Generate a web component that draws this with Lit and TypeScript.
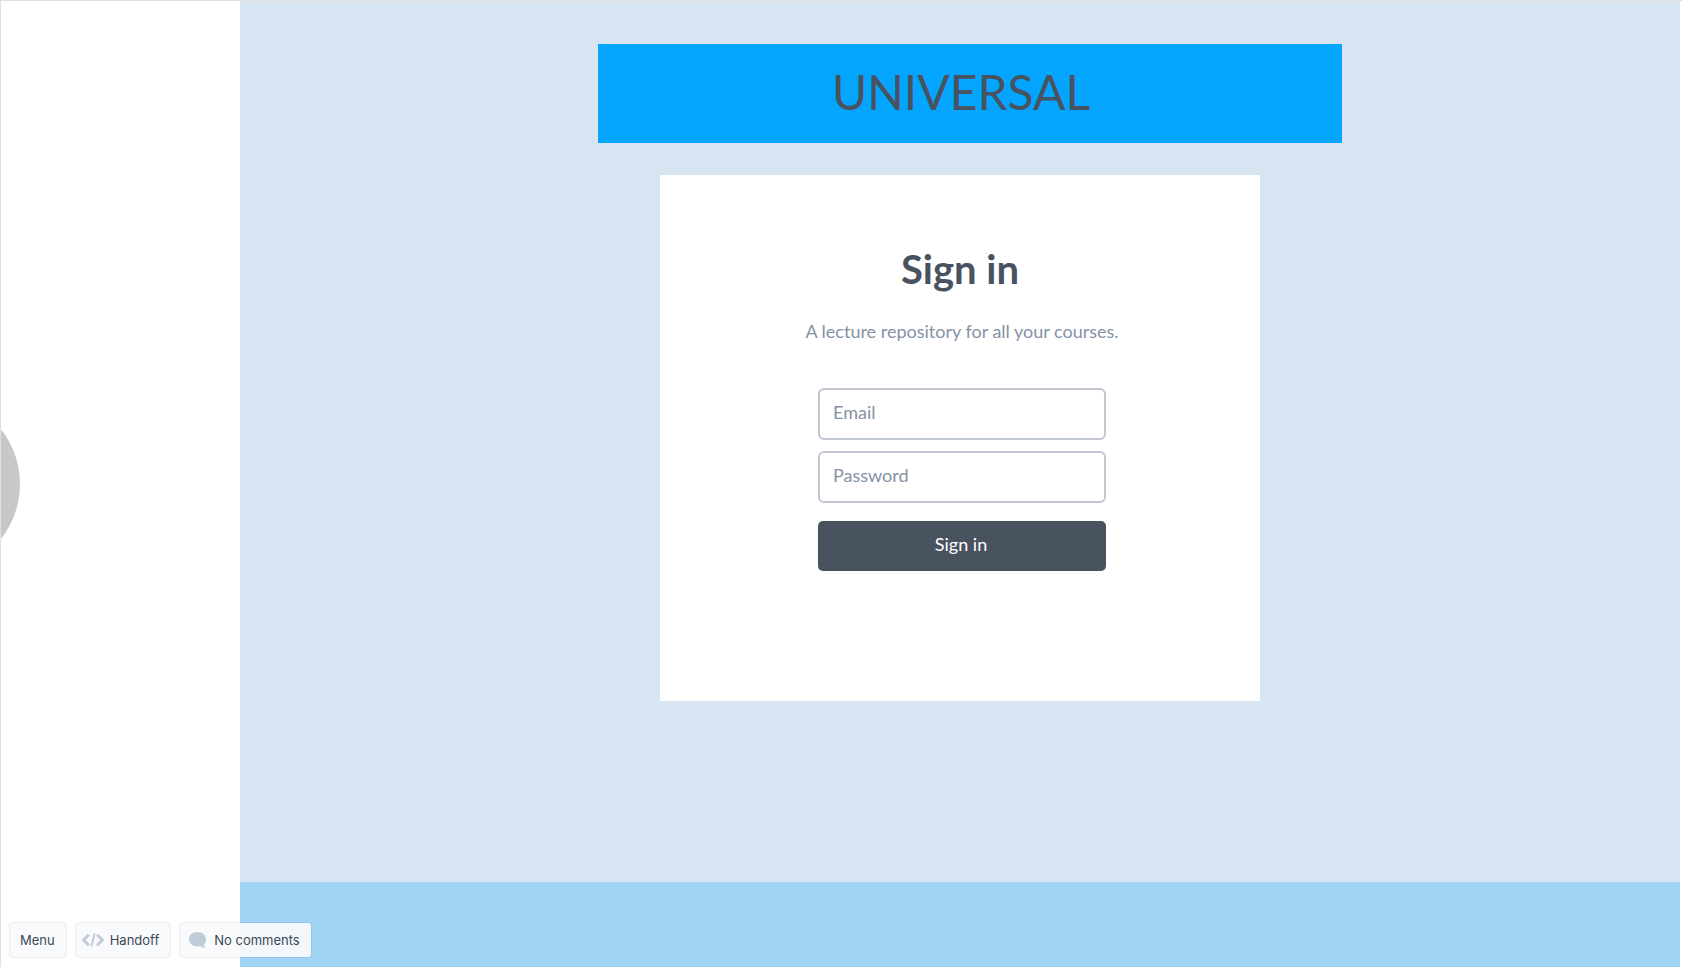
import { LitElement, html, css, svg } from "lit";
import { customElement } from "lit/decorators.js";

const codeIcon = svg`<svg class="code" viewBox="0 0 22 14" aria-hidden="true">
  <path d="M6 2.500 1.500 7 6 11.500M16 2.500 20.500 7 16 11.500" />
  <path class="slash" d="M12.400 1.200 9.600 12.800" />
</svg>`;

const bubbleIcon = svg`<svg class="bubble" viewBox="0 0 17 16" aria-hidden="true">
  <path d="M8.500 0C13.200 0 17 3 17 7.200c0 2.300-.8 4.300-2.300 5.600.1 1 .6 1.700 1.500 2.300.3.200.2.700-.2.700-2 .2-3.400-.4-4.400-1.700-1 .2-2 .3-3.100.3C3.800 14.400 0 11.400 0 7.200S3.800 0 8.500 0Z" />
</svg>`;

@customElement("sign-in-card")
export class SignInCard extends LitElement {
  static styles = css`
    :host {
      display: block;
    }
    .card {
      box-sizing: border-box;
      padding: 70px 24px 130px;
      background: #fff;
      text-align: center;
    }
    .heading {
      margin: 0;
      font-size: 40px;
      line-height: 48px;
      font-weight: 700;
      color: #49525f;
    }
    .lead {
      margin: 26px 0 0;
      padding-left: 4px;
      font-size: 18px;
      line-height: 24px;
      color: #8492a6;
    }
    .form {
      display: flex;
      flex-direction: column;
      width: 100%;
      max-width: 288px;
      margin: 0 auto;
      padding: 45px 0 0 4px;
    }
    .field {
      display: grid;
      align-items: center;
      margin-bottom: 11px;
    }
    .label,
    .input {
      grid-area: 1 / 1;
    }
    .label {
      z-index: 1;
      justify-self: start;
      padding: 0 15px 4px;
      font-size: 18px;
      line-height: 24px;
      color: #8492a6;
      pointer-events: none;
    }
    .field:has(.input:not(:placeholder-shown)) .label {
      visibility: hidden;
    }
    .input {
      box-sizing: border-box;
      width: 100%;
      height: 52px;
      padding: 0 13px 4px;
      border: 2px solid #c1c7d3;
      border-radius: 6px;
      background: #fff;
      font: 18px/24px Lato, sans-serif;
      color: #49525f;
    }
    .submit {
      height: 50px;
      margin: 7px 0 0;
      padding: 0 2px 4px 0;
      border: 0;
      border-radius: 5px;
      background: #49525f;
      font: 18px/24px Lato, sans-serif;
      color: #fff;
    }
  `;

  render() {
    return html`
      <section class="card">
        <h2 class="heading">Sign in</h2>
        <p class="lead">A lecture repository for all your courses.</p>
        <form class="form" @submit=${(e: Event) => e.preventDefault()}>
          <div class="field">
            <label class="label" for="email">Email</label>
            <input class="input" id="email" type="email" placeholder=" " />
          </div>
          <div class="field">
            <label class="label" for="password">Password</label>
            <input class="input" id="password" type="password" placeholder=" " />
          </div>
          <button class="submit" type="submit">Sign in</button>
        </form>
      </section>
    `;
  }
}

@customElement("viewer-toolbar")
export class ViewerToolbar extends LitElement {
  static styles = css`
    :host {
      display: flex;
      gap: 8px;
    }
    .item {
      display: flex;
      align-items: center;
      height: 36px;
      padding: 0 11px 0 10px;
      border: 1px solid rgba(60, 90, 130, 0.1);
      border-radius: 4px;
      background: rgba(249, 250, 252, 0.92);
      background-clip: padding-box;
      font: 13px/20px Inter, sans-serif;
      color: #3c4858;
      white-space: nowrap;
    }
    .handoff {
      padding-left: 6px;
      gap: 6px;
    }
    .comments {
      padding-left: 9px;
      gap: 8px;
    }
    .code {
      width: 22px;
      height: 14px;
      fill: none;
      stroke: #c0ccda;
      stroke-width: 3;
      stroke-linecap: round;
      stroke-linejoin: round;
    }
    .slash {
      stroke-width: 2;
    }
    .bubble {
      width: 17px;
      height: 16px;
      fill: #c0ccda;
    }
  `;

  render() {
    return html`
      <button class="item" type="button">Menu</button>
      <button class="item handoff" type="button">${codeIcon}Handoff</button>
      <button class="item comments" type="button">${bubbleIcon}No comments</button>
    `;
  }
}

@customElement("app-root")
export class AppRoot extends LitElement {
  static styles = css`
    :host {
      display: flex;
      position: relative;
      box-sizing: border-box;
      min-height: 100vh;
      overflow: hidden;
      border-top: 1px solid #e0e0e0;
      border-left: 1px solid #e0e0e0;
      background: #fff;
      font-family: Lato, sans-serif;
    }
    .frame {
      flex: 1;
      display: flex;
      flex-direction: column;
      margin: 0 2px 0 239px;
    }
    .main {
      flex: 1;
      display: flex;
      flex-direction: column;
      align-items: center;
      padding: 43px 24px;
      background: #d7e4f1;
    }
    .banner {
      box-sizing: border-box;
      width: 100%;
      max-width: 744px;
      margin: 0 0 32px 20px;
      padding: 18px 18px 21px 0;
      background: #03a5ff;
      text-align: center;
    }
    .brand {
      margin: 0;
      font-size: 48px;
      line-height: 60px;
      font-weight: 400;
      color: #49525f;
    }
    .signin {
      width: 100%;
      max-width: 600px;
    }
    .footer {
      height: 85px;
      background: #9fd4f3;
    }
    .handle {
      position: absolute;
      top: 395px;
      left: -157px;
      width: 176px;
      height: 176px;
      border-radius: 50%;
      background: #c8c8c8;
    }
    .toolbar {
      position: absolute;
      left: 8px;
      bottom: 9px;
    }
  `;

  render() {
    return html`
      <div class="frame">
        <main class="main">
          <header class="banner"><h1 class="brand">UNIVERSAL</h1></header>
          <sign-in-card class="signin"></sign-in-card>
        </main>
        <footer class="footer"></footer>
      </div>
      <div class="handle"></div>
      <viewer-toolbar class="toolbar"></viewer-toolbar>
    `;
  }
}
